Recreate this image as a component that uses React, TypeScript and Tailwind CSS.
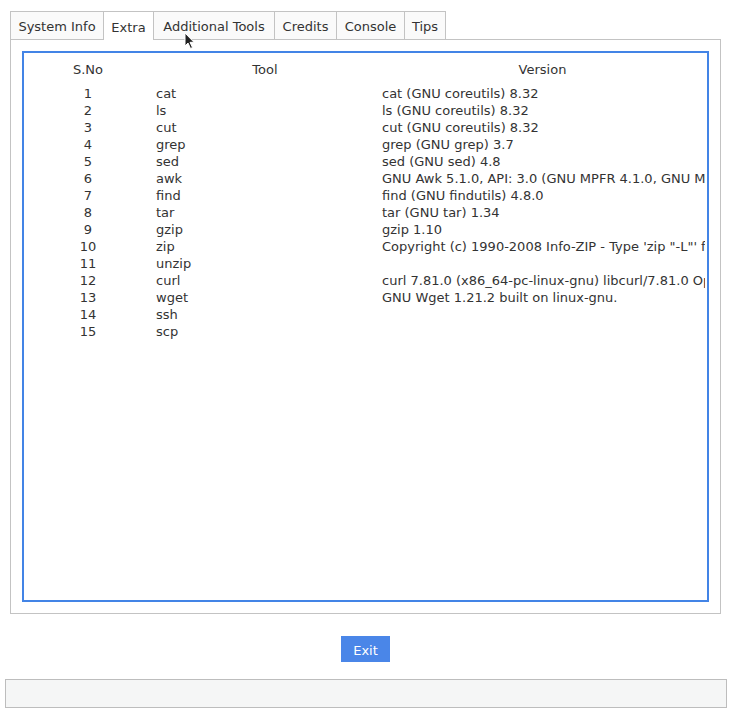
const tabs = [
  { label: "System Info", w: "w-[94px]" },
  { label: "Extra", w: "w-[50px]", active: true },
  { label: "Additional Tools", w: "w-[121px]" },
  { label: "Credits", w: "w-[62px]" },
  { label: "Console", w: "w-[68px]" },
  { label: "Tips", w: "w-[41px]" },
];

const rows: [string, string, string][] = [
  ["1", "cat", "cat (GNU coreutils) 8.32"],
  ["2", "ls", "ls (GNU coreutils) 8.32"],
  ["3", "cut", "cut (GNU coreutils) 8.32"],
  ["4", "grep", "grep (GNU grep) 3.7"],
  ["5", "sed", "sed (GNU sed) 4.8"],
  ["6", "awk", "GNU Awk 5.1.0, API: 3.0 (GNU MPFR 4.1.0, GNU MP 6.2.1)"],
  ["7", "find", "find (GNU findutils) 4.8.0"],
  ["8", "tar", "tar (GNU tar) 1.34"],
  ["9", "gzip", "gzip 1.10"],
  ["10", "zip", "Copyright (c) 1990-2008 Info-ZIP - Type 'zip \"-L\"' for software license."],
  ["11", "unzip", ""],
  ["12", "curl", "curl 7.81.0 (x86_64-pc-linux-gnu) libcurl/7.81.0 OpenSSL/3.0.2 zlib/1.2.11"],
  ["13", "wget", "GNU Wget 1.21.2 built on linux-gnu."],
  ["14", "ssh", ""],
  ["15", "scp", ""],
];

export default function App() {
  return (
    <div
      className="relative w-[732px] h-[712px] bg-white text-[#333333] text-[13px] leading-[17px]"
      style={{ fontFamily: '"DejaVu Sans", sans-serif' }}
    >
      {/* notebook */}
      <div className="pt-[11px] pl-[10px] w-[721px]">
        <div className="flex h-[29px]">
          {tabs.map((t, i) => (
            <div
              key={t.label}
              className={`${t.w} flex items-center justify-center pt-[2px] border-t border-r border-[#c3c3c3] ${
                i === 0 ? "border-l" : ""
              } ${t.active ? "bg-white" : "bg-[#fafafa] border-b"}`}
            >
              {t.label}
            </div>
          ))}
          <div className="flex-1 border-b border-[#c3c3c3]" />
        </div>

        <div className="h-[574px] border-x border-b border-[#c3c3c3] px-[11px] pt-[11px] pb-[11px]">
          {/* treeview */}
          <div className="h-full border-2 border-[#4384e6] overflow-hidden">
            <div className="flex h-[31px] pt-[2px] items-center">
              <div className="w-[128px] text-center">S.No</div>
              <div className="w-[226px] text-center">Tool</div>
              <div className="flex-1 text-center">Version</div>
            </div>
            <div className="pt-[1px]">
              {rows.map(([n, tool, ver]) => (
                <div key={n} className="flex h-[17px]">
                  <div className="w-[128px] text-center">{n}</div>
                  <div className="w-[226px] pl-[4px] whitespace-nowrap">{tool}</div>
                  <div className="flex-1 pl-[4px] mr-[2px] whitespace-nowrap overflow-hidden">{ver}</div>
                </div>
              ))}
            </div>
          </div>
        </div>
      </div>

      {/* exit */}
      <div className="flex justify-center pt-[22px]">
        <button className="w-[49px] h-[26px] ml-[-1px] pt-[2px] bg-[#4a86e8] text-white flex items-center justify-center">
          Exit
        </button>
      </div>

      {/* status bar */}
      <div className="mx-[5px] mt-[17px] w-[722px] h-[29px] bg-[#f5f6f6] border border-[#bdbdbd]" />

      {/* mouse cursor */}
      <svg className="absolute left-[184px] top-[32px]" width="12" height="18" viewBox="0 0 12 18">
        <path d="M1 1 L1 14 L4 11 L6.5 16.5 L8.5 15.5 L6 10.3 L10 10.3 Z" fill="#222" stroke="#fff" strokeWidth="1" />
      </svg>
    </div>
  );
}
